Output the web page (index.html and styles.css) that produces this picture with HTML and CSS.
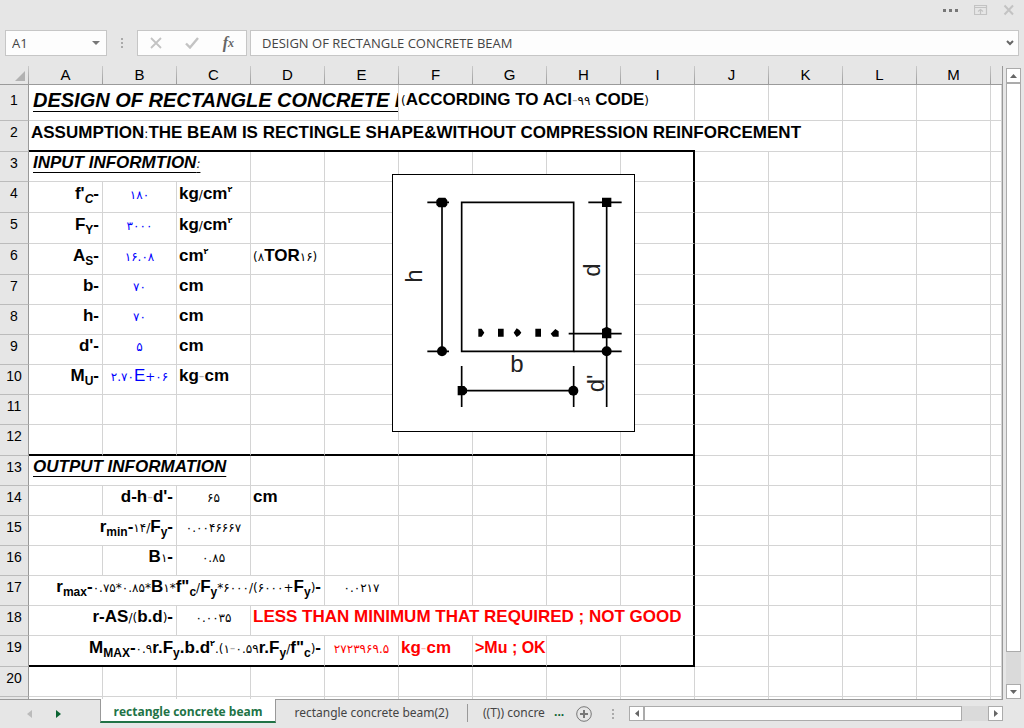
FILE: index.html
```html
<!DOCTYPE html>
<html lang="en">
<head>
    <meta charset="UTF-8">
    <meta name="viewport" content="width=device-width, initial-scale=1.0">
    <title>Design of rectangle concrete beam</title>
    <link rel="stylesheet" href="styles.css">
</head>
<body>
    <!-- Window buttons -->
    <header class="titlebar">
        <button class="icon-btn" aria-label="More">
            <svg width="18" height="16" viewBox="0 0 18 16"><path d="M2 7h3v3H2zM8 7h3v3H8zM14 7h3v3h-3z" fill="#777"/></svg>
        </button>
        <button class="icon-btn" aria-label="Ribbon display options">
            <svg width="14" height="12" viewBox="0 0 14 12" fill="none" stroke="#c3c3c3"><path d="M.5 1.5h12v9H.5zM.5 3.5h12M6.500 10V5.500M4 7.500l2.500-2 2.500 2" stroke-width="1.200"/></svg>
        </button>
        <button class="icon-btn" aria-label="Close">
            <svg width="12" height="12" viewBox="0 0 12 12"><path d="M1.500 1.500l8.500 9M10 1.500l-8.500 9" stroke="#c3c3c3" stroke-width="2"/></svg>
        </button>
    </header>

    <!-- Formula bar -->
    <div class="formula-bar">
        <div class="name-box">
            <input type="text" value="A1" aria-label="Name box">
            <button class="icon-btn" aria-label="Show names">
                <svg width="8" height="5" viewBox="0 0 8 5"><path d="M0 0h8L4 4z" fill="#777"/></svg>
            </button>
        </div>
        <div class="grip"></div>
        <div class="formula-tools">
            <button class="icon-btn" aria-label="Cancel">
                <svg width="12" height="12" viewBox="0 0 12 12"><path d="M1 1l10 10M11 1L1 11" stroke="#c3c3c3" stroke-width="1.800"/></svg>
            </button>
            <button class="icon-btn" aria-label="Enter">
                <svg width="14" height="12" viewBox="0 0 14 12"><path d="M1 6.500l4 4L13 1" fill="none" stroke="#c3c3c3" stroke-width="2.400"/></svg>
            </button>
            <button class="icon-btn fx" aria-label="Insert function"><i>f</i><i class="fx-x">x</i></button>
        </div>
        <div class="formula-input">
            <input type="text" value="DESIGN OF RECTANGLE CONCRETE BEAM" aria-label="Formula">
            <button class="icon-btn" aria-label="Expand formula bar">
                <svg width="8" height="6" viewBox="0 0 8 6"><path d="M1 1l3 3 3-3" fill="none" stroke="#666" stroke-width="2"/></svg>
            </button>
        </div>
    </div>

    <main class="workspace">
        <div class="grid">
            <table class="sheet">
                <colgroup>
                    <col class="col-head">
                    <col class="col"><col class="col"><col class="col"><col class="col"><col class="col">
                    <col class="col"><col class="col"><col class="col"><col class="col"><col class="col">
                    <col class="col"><col class="col"><col class="col">
                    <col>
                </colgroup>
                <thead>
                    <tr>
                        <th class="corner"><svg width="12" height="12" viewBox="0 0 12 12"><path d="M11 1v10H1z" fill="#b2b2b2"/></svg></th>
                        <th>A</th><th>B</th><th>C</th><th>D</th><th>E</th><th>F</th><th>G</th>
                        <th>H</th><th>I</th><th>J</th><th>K</th><th>L</th><th>M</th><th></th>
                    </tr>
                </thead>
                <tbody>
                    <tr class="row-title">
                        <th>1</th>
                        <td colspan="5" class="title">DESIGN OF RECTANGLE CONCRETE BEAM</td>
                        <td colspan="4"><span class="fa">(</span>ACCORDING TO ACI<span class="faint">-</span><span class="fa">۹۹</span> CODE<span class="fa">)</span></td>
                        <td></td><td></td><td></td><td></td><td></td>
                    </tr>
                    <tr class="tall line-below">
                        <th>2</th>
                        <td colspan="9" class="spill">ASSUMPTION<span class="fa">:</span>THE BEAM IS RECTINGLE SHAPE&amp;WITHOUT COMPRESSION REINFORCEMENT</td>
                        <td class="no-line"></td><td></td><td></td><td></td><td></td>
                    </tr>
                    <tr>
                        <th>3</th>
                        <td colspan="3" class="section"><u>INPUT INFORMTION<span class="fa">:</span></u></td>
                        <td></td><td></td><td></td><td></td><td></td><td class="edge"></td><td></td><td></td><td></td><td></td><td></td>
                    </tr>
                    <tr class="tall">
                        <th>4</th>
                        <td class="right">f'<sub><i>C</i></sub>-</td><td class="input">۱۸۰</td><td>kg<span class="fa">/</span>cm<sup>۲</sup></td>
                        <td></td><td></td><td></td><td></td><td></td><td class="edge"></td><td></td><td></td><td></td><td></td><td></td>
                    </tr>
                    <tr class="tall">
                        <th>5</th>
                        <td class="right">F<sub>Y</sub>-</td><td class="input">۳۰۰۰</td><td>kg<span class="fa">/</span>cm<sup>۲</sup></td>
                        <td></td><td></td><td></td><td></td><td></td><td class="edge"></td><td></td><td></td><td></td><td></td><td></td>
                    </tr>
                    <tr class="tall">
                        <th>6</th>
                        <td class="right">A<sub>S</sub>-</td><td class="input">۱۶.۰۸</td><td>cm<sup>۲</sup></td>
                        <td><span class="fa">(۸</span>TOR<span class="fa">۱۶)</span></td><td></td><td></td><td></td><td></td><td class="edge"></td><td></td><td></td><td></td><td></td><td></td>
                    </tr>
                    <tr>
                        <th>7</th>
                        <td class="right">b-</td><td class="input">۷۰</td><td>cm</td>
                        <td></td><td></td><td></td><td></td><td></td><td class="edge"></td><td></td><td></td><td></td><td></td><td></td>
                    </tr>
                    <tr>
                        <th>8</th>
                        <td class="right">h-</td><td class="input">۷۰</td><td>cm</td>
                        <td></td><td></td><td></td><td></td><td></td><td class="edge"></td><td></td><td></td><td></td><td></td><td></td>
                    </tr>
                    <tr>
                        <th>9</th>
                        <td class="right">d'-</td><td class="input">۵</td><td>cm</td>
                        <td></td><td></td><td></td><td></td><td></td><td class="edge"></td><td></td><td></td><td></td><td></td><td></td>
                    </tr>
                    <tr>
                        <th>10</th>
                        <td class="right">M<sub>U</sub>-</td><td class="input">۲.۷۰<span class="exp">E</span>+۰۶</td><td>kg<span class="faint">-</span>cm</td>
                        <td></td><td></td><td></td><td></td><td></td><td class="edge"></td><td></td><td></td><td></td><td></td><td></td>
                    </tr>
                    <tr>
                        <th>11</th>
                        <td></td><td></td><td></td><td></td><td></td><td></td><td></td><td></td><td class="edge"></td><td></td><td></td><td></td><td></td><td></td>
                    </tr>
                    <tr class="tall line-below">
                        <th>12</th>
                        <td></td><td></td><td></td><td></td><td></td><td></td><td></td><td></td><td class="edge"></td><td></td><td></td><td></td><td></td><td></td>
                    </tr>
                    <tr>
                        <th>13</th>
                        <td colspan="3" class="section"><u>OUTPUT INFORMATION</u></td>
                        <td></td><td></td><td></td><td></td><td></td><td class="edge"></td><td></td><td></td><td></td><td></td><td></td>
                    </tr>
                    <tr>
                        <th>14</th>
                        <td></td><td class="right">d-h<span class="faint">-</span>d'-</td><td class="value">۶۵</td><td>cm</td>
                        <td></td><td></td><td></td><td></td><td class="edge"></td><td></td><td></td><td></td><td></td><td></td>
                    </tr>
                    <tr>
                        <th>15</th>
                        <td colspan="2" class="right">r<sub>min</sub>-<span class="fa">۱۴/</span>F<sub>y</sub>-</td><td class="value">۰.۰۰۴۶۶۶۷</td><td></td>
                        <td></td><td></td><td></td><td></td><td class="edge"></td><td></td><td></td><td></td><td></td><td></td>
                    </tr>
                    <tr>
                        <th>16</th>
                        <td></td><td class="right">B<span class="fa">۱</span>-</td><td class="value">۰.۸۵</td><td></td>
                        <td></td><td></td><td></td><td></td><td class="edge"></td><td></td><td></td><td></td><td></td><td></td>
                    </tr>
                    <tr>
                        <th>17</th>
                        <td colspan="4" class="right">r<sub>max</sub>-<span class="fa">۰.۷۵*۰.۸۵*</span>B<span class="fa">۱*</span>f"<sub>c</sub><span class="fa">/</span>F<sub>y</sub><span class="fa">*۶۰۰۰/(۶۰۰۰+</span>F<sub>y</sub><span class="fa">)</span>-</td><td class="value">۰.۰۲۱۷</td>
                        <td></td><td></td><td></td><td class="edge"></td><td></td><td></td><td></td><td></td><td></td>
                    </tr>
                    <tr>
                        <th>18</th>
                        <td colspan="2" class="right">r-AS<span class="fa">/(</span>b.d<span class="fa">)</span>-</td><td class="value">۰.۰۰۳۵</td>
                        <td colspan="6" class="alert edge">LESS THAN MINIMUM THAT REQUIRED ; NOT GOOD</td><td></td><td></td><td></td><td></td><td></td>
                    </tr>
                    <tr class="tall line-below">
                        <th>19</th>
                        <td colspan="4" class="right">M<sub>MAX</sub>-<span class="fa">۰.۹</span>r.F<sub>y</sub>.b.d<sup>۲</sup><span class="fa">.(۱</span><span class="faint">-</span><span class="fa">۰.۵۹</span>r.F<sub>y</sub><span class="fa">/</span>f"<sub>c</sub><span class="fa">)</span>-</td><td class="value alert">۲۷۲۳۹۶۹.۵</td><td class="alert">kg<span class="faint">-</span>cm</td><td class="alert verdict">&gt;Mu ; OK</td>
                        <td></td><td class="edge"></td><td></td><td></td><td></td><td></td><td></td>
                    </tr>
                    <tr>
                        <th>20</th>
                        <td></td><td></td><td></td><td></td><td></td><td></td><td></td><td></td><td></td><td></td><td></td><td></td><td></td><td></td>
                    </tr>
                    <tr>
                        <th></th>
                        <td></td><td></td><td></td><td></td><td></td><td></td><td></td><td></td><td></td><td></td><td></td><td></td><td></td><td></td>
                    </tr>
                </tbody>
            </table>

            <!-- Beam section drawing -->
            <svg class="beam" viewBox="36 27 729 774" role="img" aria-label="Beam section">
                <rect x="37.500" y="28.500" width="726" height="771" fill="#fff" stroke="#000" stroke-width="3"/>
                <g fill="none" stroke="#000" stroke-width="5">
                    <path d="M245 112h336v447H245z"/>
                    <path d="M142 112h65M142 559h65M186 112v447"/>
                    <path d="M625 112h100M566 506h159M581 559h144M680 112v614"/>
                    <path d="M245 603v123M581 603v123M245 677h336"/>
                </g>
                <path d="M176 98h20l6 8v14l-6 7h-20l-7-7v-14zM666 98h28v28h-28zM666 492l14-7 14 7v28h-28zM233 663h20l8 8v12l-8 8h-20z"/>
                <circle cx="186" cy="559" r="15"/>
                <circle cx="680" cy="559" r="15"/>
                <circle cx="580" cy="677" r="15"/>
                <path d="M295 491h10l8 12-8 12h-10zM354 491h17v24h-17zM401 503l9-13 8 5 6 8-6 8-8 5zM466 491h17v24h-17zM512 506l14-14 10 7v16h-17z"/>
                <g class="beam-label">
                    <text transform="translate(125 353) rotate(-90)">h</text>
                    <text transform="translate(660 335) rotate(-90)">d</text>
                    <text x="391" y="620">b</text>
                    <text transform="translate(672 682) rotate(-90)">d'</text>
                </g>
            </svg>
        </div>

        <div class="scroll scroll-v">
            <button aria-label="Scroll up"><svg width="7" height="4" viewBox="0 0 7 4"><path d="M0 4h7L3.500 0z" fill="#666"/></svg></button>
            <div class="thumb"></div>
            <div class="track"></div>
            <button aria-label="Scroll down"><svg width="7" height="4" viewBox="0 0 7 4"><path d="M0 0h7L3.500 4z" fill="#666"/></svg></button>
        </div>
    </main>

    <!-- Sheet tabs -->
    <footer class="tabbar">
        <div class="tab-nav">
            <button class="icon-btn" aria-label="Previous sheet"><svg width="5" height="8" viewBox="0 0 5 8"><path d="M5 0v8L0 4z" fill="#bbb"/></svg></button>
            <button class="icon-btn" aria-label="Next sheet"><svg width="5" height="8" viewBox="0 0 5 8"><path d="M0 0v8l5-4z" fill="#0b6432"/></svg></button>
        </div>
        <button class="tab active">rectangle concrete beam</button>
        <button class="tab">rectangle concrete beam(2)</button>
        <button class="tab tab-cut">((T)) concre</button>
        <button class="icon-btn more">...</button>
        <button class="icon-btn add" aria-label="New sheet">
            <svg width="16" height="16" viewBox="0 0 16 16" fill="none" stroke="#777"><circle cx="8" cy="8" r="7.300"/><path d="M8 4v8M4 8h8" stroke-width="2"/></svg>
        </button>
        <div class="grip"></div>
        <div class="scroll scroll-h">
            <button aria-label="Scroll left"><svg width="4" height="7" viewBox="0 0 4 7"><path d="M4 0v7L0 3.500z" fill="#666"/></svg></button>
            <div class="thumb"></div>
            <div class="track"></div>
            <button aria-label="Scroll right"><svg width="4" height="7" viewBox="0 0 4 7"><path d="M0 0v7l4-3.500z" fill="#666"/></svg></button>
        </div>
    </footer>
</body>
</html>
```
FILE: styles.css
```css
* {
    margin: 0;
    padding: 0;
    box-sizing: border-box;
}

body {
    display: flex;
    flex-direction: column;
    height: 100vh;
    overflow: hidden;
    background: #e6e6e6;
    color: #444;
    font-family: "Open Sans", "Noto Sans", sans-serif;
    font-size: 12px;
}

button, input {
    font: inherit;
    color: inherit;
    border: none;
    outline: none;
}

svg {
    display: block;
}

.icon-btn {
    display: flex;
    align-items: center;
    justify-content: center;
    background: none;
}

/* Title bar */
.titlebar {
    display: flex;
    align-items: center;
    justify-content: flex-end;
    gap: 15px;
    height: 20px;
    margin-bottom: 10px;
    padding-right: 9px;
}

/* Formula bar */
.formula-bar {
    display: flex;
    height: 26px;
    margin: 0 5px 10px;
}

.name-box,
.formula-tools,
.formula-input {
    display: flex;
    align-items: center;
    background: #fdfdfd;
    border: 1px solid #c6c6c6;
}

.name-box {
    width: 102px;
    padding: 0 6px;
}

.name-box input,
.formula-input input {
    flex: 1;
    min-width: 0;
    background: none;
    font-size: 13px;
}

.grip {
    align-self: center;
    width: 2px;
    height: 10px;
    margin: 0 14px;
    background: repeating-linear-gradient(#aaa 0 2px, transparent 2px 4px);
}

.formula-tools {
    width: 110px;
    margin-right: 3px;
    padding: 0 12px;
    justify-content: space-between;
}

.fx {
    font-family: "Liberation Serif", serif;
    font-size: 16px;
    font-weight: bold;
    color: #666;
}

.fx-x {
    font-size: 12px;
}

.formula-input {
    flex: 1;
    padding: 0 4px 0 11px;
}

/* Sheet */
.workspace {
    display: flex;
    flex: 1;
    min-height: 0;
}

.grid {
    position: relative;
    flex: 1;
    overflow: hidden;
    border-right: 1px solid #999;
}

.sheet {
    width: 100%;
    table-layout: fixed;
    border-collapse: separate;
    border-spacing: 0;
    background: #fff;
    color: #000;
    font-family: "Liberation Sans", Arial, sans-serif;
    font-size: 17px;
    line-height: 20px;
}

.col-head {
    width: 29px;
}

.col {
    width: 74px;
}

.sheet th {
    background: #e6e6e6;
    font-weight: normal;
    vertical-align: top;
}

.sheet thead th {
    height: 19px;
    border-bottom: 1px solid #999;
    border-right: 1px solid;
    border-image: linear-gradient(#ccc, #999) 1;
    font-size: 15px;
    line-height: 18px;
}

.sheet thead th:last-child {
    border-right: none;
}

.corner svg {
    margin: 4px 0 0 14px;
}

.sheet tbody tr {
    height: 30px;
}

.sheet tbody .tall {
    height: 31px;
}

.sheet tbody .row-title {
    height: 36px;
}

.sheet tbody th {
    padding-top: 1px;
    border-right: 1px solid #999;
    border-bottom: 1px solid #bbb;
    font-size: 14px;
}

.sheet .row-title th {
    padding-top: 5px;
}

.sheet td {
    padding: 1px 3px 0 2px;
    border-right: 1px solid #d4d4d4;
    border-bottom: 1px solid #d4d4d4;
    font-weight: bold;
    vertical-align: top;
    white-space: nowrap;
    overflow: hidden;
}

.sheet .tall td {
    padding-top: 2px;
}

.sheet .row-title td {
    padding-top: 5px;
}

.sheet .title {
    padding-top: 4px;
    padding-left: 4px;
    font-size: 20px;
    font-style: italic;
    text-decoration: underline;
    text-decoration-thickness: 1px;
    text-underline-offset: 4px;
}

.sheet .section {
    padding-left: 4px;
    font-style: italic;
}

.section u {
    text-decoration-thickness: 1px;
    text-underline-offset: 4px;
}

.sheet .spill {
    padding-top: 1px;
    overflow: visible;
    border-right: none;
}

/* Box around input and output */
.line-below td:nth-child(-n+10) {
    border-bottom: 2px solid #000;
}

.line-below .edge ~ td,
.line-below .spill ~ td {
    border-bottom: 1px solid #d4d4d4;
}

.sheet .edge {
    border-right: 2px solid #000;
}

.sheet .no-line {
    border-right: none;
}

.sheet .right {
    text-align: right;
}

.sheet .input,
.sheet .value {
    padding-right: 2px;
    text-align: center;
    font-family: "DejaVu Sans", sans-serif;
    font-size: 12px;
    font-weight: normal;
    line-height: 22px;
}

.sheet .input {
    color: #00f;
}

.exp {
    font-family: "Liberation Sans", Arial, sans-serif;
    font-size: 17px;
    line-height: 20px;
}

.sheet .alert {
    color: #f00;
}

.sheet .verdict {
    padding-right: 0;
    font-size: 16px;
}

.fa {
    font-family: "DejaVu Sans", sans-serif;
    font-size: 12px;
    font-weight: normal;
}

.faint {
    font-weight: normal;
    opacity: 0.3;
}

sub, sup {
    font-size: 12px;
    line-height: 0;
}

sub {
    vertical-align: -4px;
}

sup {
    font-family: "DejaVu Sans", sans-serif;
    font-size: 8px;
    vertical-align: 7px;
}

.beam {
    position: absolute;
    top: 108px;
    left: 392px;
    width: 243px;
    height: 258px;
}

.beam-label {
    font-family: "Liberation Sans", Arial, sans-serif;
    font-size: 72px;
    fill: #222;
}

/* Scrollbars */
.scroll {
    display: flex;
}

.scroll button {
    display: flex;
    flex: none;
    align-items: center;
    justify-content: center;
    width: 15px;
    height: 15px;
    background: #fff;
    border: 1px solid #ababab;
}

.thumb {
    background: #fff;
    border: 1px solid #ababab;
}

.track {
    background: #dadada;
}

.scroll-v {
    flex-direction: column;
    width: 15px;
    margin: 2px 3px 0;
}

.scroll-v .thumb {
    flex: 18;
}

.scroll-v .track {
    flex: 1;
}

.scroll-h {
    flex: 1;
    align-self: flex-start;
    height: 15px;
    margin: 7px 21px 0 0;
}

.scroll-h .thumb {
    flex: 12;
}

.scroll-h .track {
    flex: 1;
}

/* Sheet tabs */
.tabbar {
    display: flex;
    height: 29px;
    background: linear-gradient(#999, #999) 0 0 / calc(100% - 21px) 1px no-repeat;
}

.tab-nav {
    display: flex;
    align-items: center;
    justify-content: center;
    gap: 24px;
    width: 100px;
    padding-right: 13px;
}

.tab {
    width: 191px;
    height: 24px;
    padding-top: 2px;
    background: none;
    font-family: "Noto Sans", sans-serif;
    white-space: nowrap;
}

.tab.active {
    width: 176px;
    background: #fff;
    border: 1px solid #999;
    border-top: none;
    border-bottom: 2px solid #217346;
    color: #217346;
    font-family: "Open Sans", sans-serif;
    font-weight: bold;
}

.tab-cut {
    width: 81px;
    height: 18px;
    margin-top: 5px;
    padding: 0 0 0 15px;
    border-left: 1px solid #999;
    line-height: 16px;
    text-align: left;
    overflow: hidden;
}

.more {
    height: 24px;
    padding: 0 6px;
    color: #0b6432;
    font-weight: bold;
}

.add {
    height: 29px;
    margin-left: 6px;
}

.tabbar .grip {
    margin: 0 15px 0 20px;
}
```
